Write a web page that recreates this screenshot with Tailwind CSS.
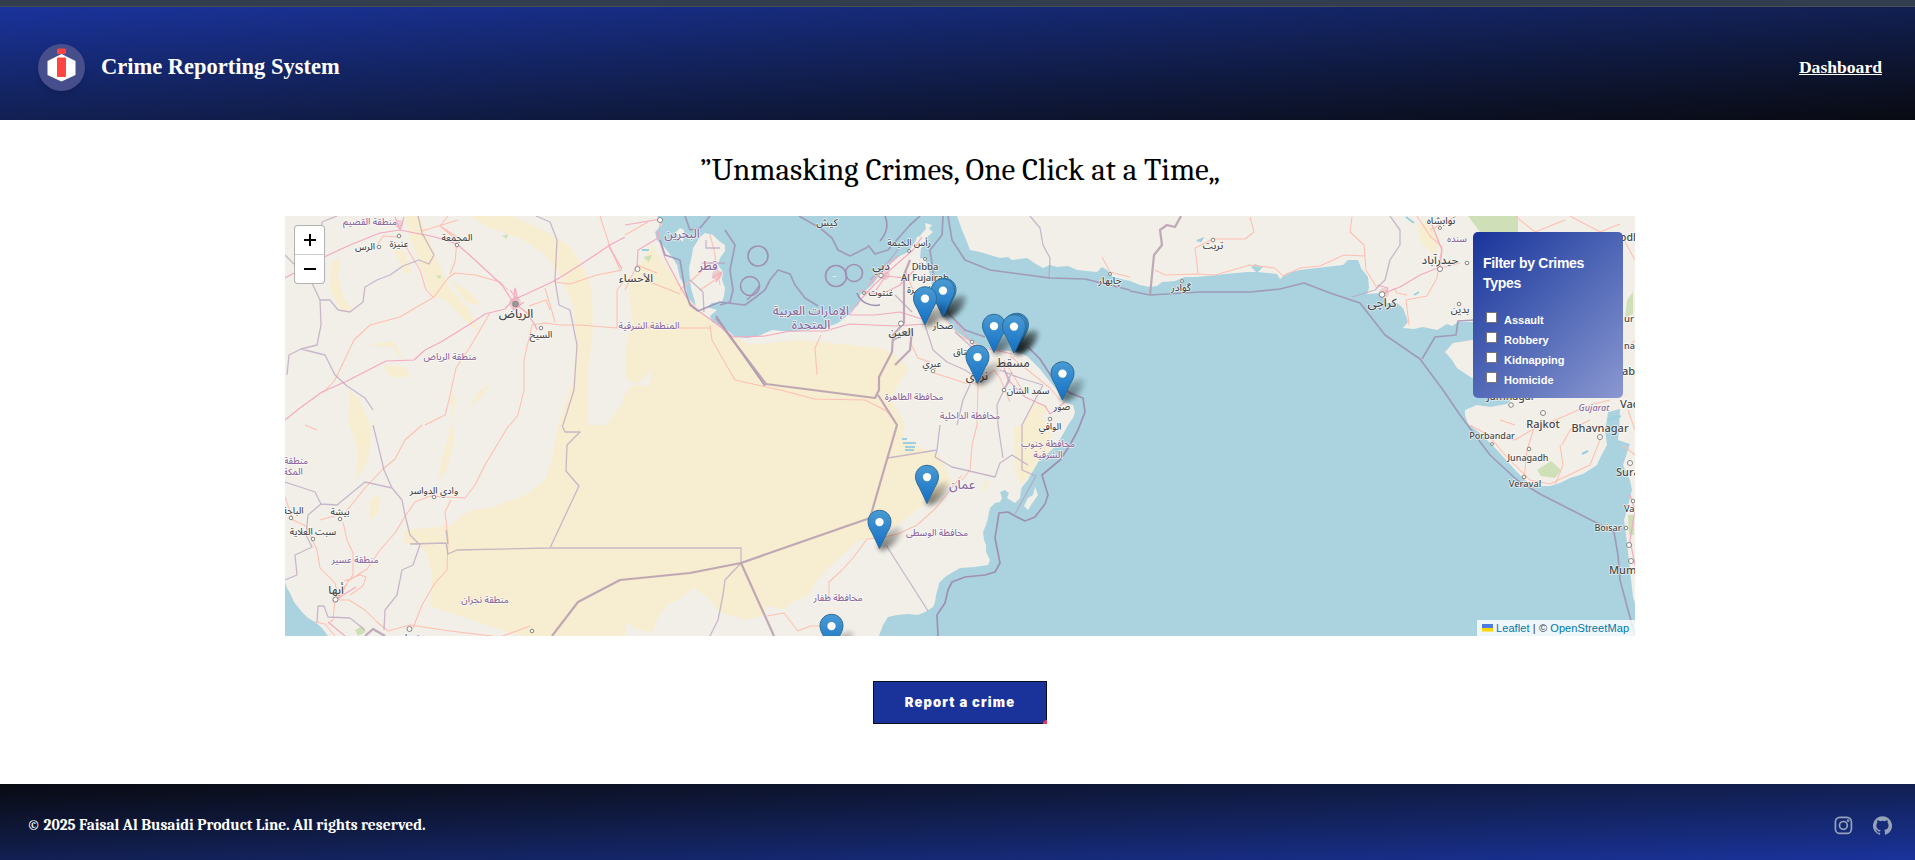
<!DOCTYPE html>
<html lang="en">
<head>
<meta charset="utf-8">
<title>Crime Reporting System</title>
<script src="https://cdn.jsdelivr.net/npm/@tailwindcss/browser@4"></script>
</head>
<body class="bg-white h-[860px] overflow-hidden flex flex-col font-['Liberation_Sans',sans-serif]">
<div class="h-[7px] shrink-0 bg-[#323d4d] border-b border-[#4a4d55]"></div>
<header class="h-[113px] shrink-0 flex items-center justify-between pl-[38px] pr-[33px] pb-px bg-linear-to-br from-[#1a339c] to-[#090a12] text-white font-['Liberation_Serif',serif] font-bold">
  <div class="flex items-center gap-[16px] pt-[9px]">
    <svg class="size-[47px] rounded-full bg-[#464f8c] shadow-md" viewBox="0 0 47 47"><path d="M23.500 10 37.500 17V31L23.500 37.500 9.500 31V17Z" fill="#fff"/><rect x="19" y="13.500" width="9" height="19.500" rx="1" fill="#ff4444"/><rect x="19" y="4.500" width="9" height="5.500" rx="1.500" fill="#ff4444"/></svg>
    <h1 class="text-[22.500px] leading-7 pb-[2px] whitespace-nowrap">Crime Reporting System</h1>
  </div>
  <a class="text-[17.600px] underline pt-[8px]">Dashboard</a>
</header>
<main class="flex-1 flex flex-col items-center">
  <h2 class="h-[96px] pt-[30px] text-[31px] leading-[40px] text-black font-['Cambria','Caladea','Liberation_Serif',serif] whitespace-nowrap mr-[-5px]">”Unmasking Crimes, One Click at a Time„</h2>
  <div class="relative w-[1350px] h-[420px] overflow-hidden mr-[-5px]">
  <svg class="block w-[1350px] h-[420px]" viewBox="285 216 1350 420">
    <defs>
      <linearGradient id="pin" x1="0" y1="0" x2="0" y2="1"><stop offset="0" stop-color="#4a9bd2"/><stop offset="1" stop-color="#126fc6"/></linearGradient>
      <linearGradient id="shade" x1="0" y1="0" x2="1" y2="0"><stop offset="0" stop-color="#000" stop-opacity=".75"/><stop offset="1" stop-color="#000" stop-opacity=".15"/></linearGradient>
      <filter id="soft" x="-50%" y="-80%" width="200%" height="260%"><feGaussianBlur stdDeviation="2.600"/></filter>
      <symbol id="marker" viewBox="0 0 50 45" width="50" height="45" overflow="visible">
        <ellipse cx="23" cy="29" rx="15" ry="6.500" transform="rotate(-45 23 29)" fill="url(#shade)" opacity=".75" filter="url(#soft)"/>
        <path d="M12.500 .8C6 .8 1 5.800 1 12.300c0 4.200 2 7.500 4 11L12.500 39 20 23.300c2-3.500 4-6.800 4-11C24 5.800 19 .8 12.500.8Z" fill="url(#pin)" stroke="#2e6c97" stroke-width="1"/>
        <circle cx="12.500" cy="12.600" r="4.200" fill="#fff"/>
      </symbol>
      <clipPath id="arabia"><path d="M285 216V582L290 593 302 612 315 622 328 636H879L883 625 888 617 908 614 927 611 935 602 938 588 945 577 960 568 988 565 990 560 986 545 983 532 988 518 990 508 995 503 1000 492 1005 490 1009 493 1007 498 1015 503 1020 498 1022 487 1028 480 1038 462 1055 447 1068 425 1075 412 1073 405 1060 397 1047 378 1033 362 1023 354 1010 351 997 350 972 343 957 332 943 315 937 295 932 287 925 259 921 248 850 290 825 328 735 337 712 322 690 300 657 240 657 216Z"/></clipPath>
    </defs>
    <rect x="285" y="216" width="1350" height="420" fill="#aad3df"/>
    <!-- land -->
    <g fill="#f2efe9">
      <path d="M285 216V582L287 588 290 593 294 602 302 612 308 618 315 622 322 628 328 636H879L883 625 888 617 897 615 908 614 918 615 927 611 933 607 935 602 936 595 938 588 939 583 945 577 953 572 960 568 975 567 988 565 990 560 986 552 986 545 984 540 983 532 986 525 988 518 989 512 990 508 995 503 1000 502 1002 498 1000 492 1005 490 1009 493 1007 498 1015 503 1020 498 1021 490 1022 487 1028 480 1032 472 1038 462 1046 452 1055 447 1062 436 1068 425 1073 418 1075 412 1073 405 1063 402 1060 397 1056 389 1047 378 1040 369 1033 362 1028 357 1023 354 1010 351 997 350 985 348 972 343 964 337 957 332 949 323 943 315 940 304 937 295 932 287 930 275 925 259 920 258 921 248 928 243 925 239 933 232 929 229 932 225 925 223 926 229 923 232 920 236 917 237 915 242 908 252 900 256 892 262 886 266 882 272 872 285 860 295 861 300 858 305 853 309 848 315 838 323 825 328 810 330 792 332 772 330 758 336 748 338 735 337 725 328 712 322 710 316 717 310 707 307 712 303 722 302 724 296 725 288 722 280 723 272 718 265 720 258 725 251 725 245 719 241 713 235 705 233 700 237 697 242 693 248 692 255 689 268 690 280 691 288 695 302 696 308 693 304 688 298 686 288 680 278 677 265 672 257 665 248 657 240 655 232 662 225 657 216Z"/>
      <path d="M957 216 962 230 967 242 970 250 980 252 990 255 1000 258 1008 257 1012 260 1027 258 1036 264 1043 268 1050 265 1057 267 1068 266 1077 270 1097 272 1102 267 1107 270 1113 277 1130 281 1140 285 1150 287 1157 286 1162 282 1175 281 1185 277 1197 277 1225 274 1247 272 1256 272 1251 267 1255 264 1263 267 1258 272 1277 274 1280 279 1287 273 1300 270 1317 268 1343 265 1348 260 1358 260 1361 268 1368 277 1369 288 1367 294 1383 293 1384 300 1387 303 1397 303 1403 308 1406 316 1408 322 1403 328 1414 329 1423 327 1437 330 1447 324 1452 326 1458 322 1472 322 1500 325 1500 338 1472 340 1453 343 1445 352 1452 360 1457 368 1472 378 1500 390 1540 385 1540 392 1513 398 1507 404 1490 407 1477 405 1465 410 1465 415 1468 424 1480 433 1497 450 1507 461 1517 472 1527 482 1538 486 1550 486 1560 483 1570 478 1583 474 1597 465 1601 456 1607 445 1605 430 1607 420 1608 412 1620 409 1619 428 1618 440 1630 444 1623 465 1630 480 1632 490 1627 510 1624 520 1627 543 1630 570 1633 597 1635 603V216Z"/>
      <path d="M676 232 680 228 684 230 683 242 679 238ZM1024 506 1028 498 1033 495 1035 487 1038 495 1033 502 1028 510Z"/>
      <path d="M833 276h3v1h-3Z"/>
    </g>
    <!-- sand -->
    <g fill="#f7edd1" clip-path="url(#arabia)">
      <path d="M470 216H512L545 231 570 246 584 268 592 290 593 330 588 370 588 425 606 425 623 403 624 395 633 385 650 386 652 370 636 384 625 378 626 345 632 320 628 285 640 265 652 245 690 300 722 330 750 345 800 340 880 348 895 355 909 368 897 386 892 400 905 425 902 441 940 455 948 475 952 482 935 500 918 508 905 520 895 526 877 537 858 541 841 556 827 569 815 583 808 596 795 600 784 610 768 606 762 616 745 620 720 612 708 598 694 588 682 598 668 605 657 619 653 632 640 630 626 623 625 636H520L430 606 432 575 427 555 420 545 405 544 404 530 450 526 470 510 490 508 525 495 545 480 552 460 558 425 563 410 573 380 577 340 573 305 560 275 545 255 520 238 490 228Z"/>
      <path d="M405 216h15l15 38 13 32 20 22 12 24-14-10-18-20-18-8-10-30-10-25ZM332 262l8-4-2 20 6 20 10 14-14-2-10-20ZM392 245l14 8 6 22-8-3ZM450 280l20 12 12 14-16-4ZM493 380l-16 14-8 14 12-10ZM350 390l10 10 12 30-4 30-12 20 2-30-10-30ZM450 390l6 10-6 30-8 30-4 20 8-8 8-30ZM366 345l28-4 10 20-12-14ZM383 365l22 2 6 10-20 0ZM370 500l10-6-2 20-8 6Z"/>
      <path d="M1014 427 1044 418 1055 447 1020 486 1015 470ZM1035 402l14 4-10 15-16 3ZM985 480l5 2-7 12Z"/>
    </g>
    <path d="M1417 226l12-5 10 17-3 18-14-12Z" fill="#f7edd1"/>
    <path d="M1468 216h50v20h-35ZM1627 300l6-8v22l-8 4ZM1537 470l14-9 10 9-6 8-14-2ZM1628 515h6v20h-5ZM643 257l9-2-3 7ZM355 630l7-4 4 6-8 4ZM502 236l6-2-1 5ZM436 275l6 1-3 3Z" fill="#cfe0b8"/>
    <path d="M902 439h5m-4 4h13m-11 4h10m-10 3h9M1197 241l5-2-2 3M1414 295l5-3M1607 420l14-4M1582 454l6-3M642 250h7M1406 217l8 6" stroke="#9ccfdf" stroke-width="2" fill="none"/>
    <!-- built-up areas -->
    <g fill="#e9b9c2" opacity=".6"><circle cx="515" cy="303" r="6"/><circle cx="399" cy="224" r="4"/><circle cx="717" cy="275" r="5"/><circle cx="885" cy="275" r="5"/><circle cx="1384" cy="293" r="5"/><circle cx="335" cy="600" r="3"/></g>
    <!-- roads -->
    <g fill="none" stroke="#ffbfb0" stroke-width="1.050" stroke-linejoin="round">
      <path d="M323 393 335 380 354 340 370 325 400 317 434 297 448 278 455 273 475 275 500 282 508 290M448 216 440 226 457 240 455 262 450 274M405 245 420 270 426 290 433 297M422 231 458 220M440 226 457 237M398 237 383 236 378 244M490 313 470 347 456 368 449 400 445 415 425 425M532 325 527 347 524 360 524 390 518 415 510 425M532 325 545 323 560 325 580 325 617 328 617 290 625 280M600 216 610 247 620 270M554 282 570 284 597 275 622 270M545 288 555 322M529 306 546 300 550 310M305 425 317 430"/>
      <path d="M422 425 405 440 395 459 383 469 365 488 345 513 320 520M509 425 500 440 486 463 475 485 465 498 430 496 415 502 404 518 395 533 380 550 367 569 348 581 339 600M451 500 445 512 448 538 447 570 435 583 422 605 413 628M285 497 293 520 306 526 317 550 320 568 335 583 339 600 349 600 365 610 377 622 388 631 410 625 450 631 500 637 530 626M343 522 347 540 353 553 353 575 335 600M344 581 360 575 366 577 363 586 350 595M335 600 333 620 330 622M315 622 325 624 335 636"/>
      <path d="M710 325 712 340 735 380 780 390 815 399 865 400 885 410 895 420M711 328H625M821 335 815 348 817 375M680 290 715 260M700 290 718 278M710 235 714 250 720 285M625 235 648 222M625 290 637 265 657 273M650 282 680 294M910 342 918 358 930 362M934 373 950 378 965 383 977 384 994 370 1000 378 1010 402M978 384 977 425 972 445 970 470 962 480M962 475 950 490 936 508 917 525 898 534 880 538 867 539 853 558 841 571 829 582 829 602M767 616 784 613 798 631 810 626 830 626"/>
      <path d="M1010 356 1030 372 1050 388 1060 400M925 320 917 300 905 270M943 317 960 336 985 348M1004 360 1010 370 1025 395M1102 257 1110 272 1130 277M1155 270 1165 275 1198 274 1215 275 1250 265 1275 268 1283 276 1300 268 1320 266 1344 255 1365 256M1250 217 1254 232 1245 239H1213L1195 248 1198 273M1352 217 1350 232 1364 245 1366 270 1377 288M1417 216 1430 236 1442 247 1437 278 1427 296 1406 300 1409 325M1440 268 1460 263M1430 230 1440 225 1456 216M1394 288 1397 293 1407 295"/>
      <path d="M1470 425 1490 436 1515 440 1535 428 1560 418 1590 405 1610 400M1534 428 1527 450 1524 480M1560 445 1563 465 1555 485M1490 437 1505 455 1530 480 1550 484 1590 465 1600 440M1590 420 1570 430 1562 445M1500 420 1515 425M1624 240 1635 260M1625 350 1635 340M1628 410 1635 430M1623 445 1635 455M1515 216 1535 232 1565 220M1570 216 1600 232 1620 224"/>
    </g>
    <g fill="none" stroke="#f4a9c0" stroke-width="1.200" stroke-linejoin="round">
      <path d="M285 420 300 408 322 392 347 381 386 361 414 360 425 350 441 342 470 324 485 314 505 309 513 300 535 290 556 280 580 265 610 245 625 237M513 302 502 285 475 260 457 244 435 237 400 230 380 233 350 245 324 257 285 278M395 217 400 230 404 217M608 245 622 269M513 302 527 313 535 325 537 330M510 290 518 300 515 288 513 310 524 302"/>
      <path d="M625 225 655 220 661 219 658 238 638 250 637 268M657 232 665 258 682 290 690 303 700 312 714 322 733 337 765 336 790 331 825 331 850 324 895 326 925 324M849 315 862 298 875 284 890 270 913 250 922 237M849 315H875L900 312 925 320M860 290 880 295 900 285 922 262M943 300 950 315 975 347 1000 351 1012 354M1002 362 1008 380 1025 397 1045 406 1050 414 1065 402M1382 294 1400 287 1420 275 1440 267 1442 250 1432 225M1377 285 1388 288 1385 294M868 285 898 256M712 278 722 272 716 282M876 290 886 276 905 278M335 600 348 592 356 587M328 622 345 636M1630 495 1635 510 1630 540 1635 565"/>
    </g>
    <!-- administrative limits -->
    <g fill="none" stroke="#b79fbd" stroke-linejoin="round">
      <g stroke-width="1.300" opacity=".7">
        <path d="M337 216 322 222 320 240M418 216 422 233 434 255 429 264 419 260 403 266 390 275 377 280 365 287 363 302 350 312 338 310 330 300 320 300 312 283 300 270 285 255M320 300 321 325 317 345 301 349 289 355 287 375M301 349 325 355 335 375 347 386 365 398 373 410M536 216 550 222 557 240 555 280 559 305 570 310 577 345 574 390 563 425M373 425 378 445 384 470 392 488 402 500 405 515 410 535 420 545 413 565 402 570 397 595 385 610 384 630M285 482 300 487 315 492 321 504 337 505 365 482 392 488M321 504 308 515 306 535 312 547 295 555 297 575 285 580M317 622 318 606 324 606 328 617 350 618 365 630M448 544 446 530M410 544 446 543 448 554 457 550 550 548 741 548 741 563M562 425 565 432 580 432 567 445 566 471 579 486 550 548M741 563 725 580 723 595 718 620 710 636M940 425 937 450 935 457 952 467 995 477 1000 463 1012 455 1028 465M888 458 937 450M886 545 928 611M925 325 933 350 947 362 965 370 974 376 963 400 957 425M955 332 975 350M1000 370 1020 378 1043 385M1012 372 997 405 998 425 1003 458M1004 370 1010 380 1003 392M1043 385 1035 400 1022 425 1022 470 1036 476 1015 514M1390 216 1400 230 1400 245 1390 260 1385 280 1375 290 1352 297"/>
        <path d="M1030 216 1040 228 1043 245 1050 258 1049 278M706 240V248H720M702 263H725M690 280 703 292 704 312M870 280 890 260 905 240M895 295 912 312"/>
      </g>
      <path d="M685 216 690 230 700 228 710 216M725 230 735 245 730 270 733 290 730 302 720 305M660 240 665 255 680 260 685 290 690 305 698 311 720 302 745 305 756 297M799 216 820 228 832 238 838 250 850 256 868 247M868 245 875 254 888 250 910 225 920 216M943 216 942 235 930 250 935 285 950 315 965 330 985 337M948 216 952 240 965 260 990 270 1020 274 1050 278 1085 279 1130 290M716 316 765 386M756 297 765 290 770 280 778 270 790 274 795 285 805 298 818 306M760 285 752 295 747 300M1130 291 1150 295 1200 292 1250 292 1280 289 1304 283 1330 293 1360 303 1385 335 1420 359 1443 390 1460 415 1490 455 1517 480 1540 494 1595 522 1614 532 1618 555 1620 580 1628 610 1635 635M1422 359 1435 337 1456 335 1458 321 1475 320" stroke-width="1.700" opacity=".85" stroke="#9f90b3"/>
      <path d="M1028 347 1040 359 1055 382 1070 393 1083 398 1085 412 1078 430 1070 445 1060 460 1042 475 1048 495 1045 504 1035 517 1025 521 1015 516 1008 512 999 513 995 538 1000 563 995 572 985 575 965 577 952 582 948 590 945 603 937 615 938 636" stroke-width="1.700" stroke="#9f90b3"/>
      <path d="M716 318 766 384 875 398 879 390 879 377 892 352 893 335 904 323 904 275 910 260M878 395 897 425 870 518 741 563 690 573 620 580 578 602 552 636M741 563 774 636M1150 295 1154 255 1162 245 1160 230 1167 225 1175 227 1181 216M365 636 373 629 385 636M893 340 912 330 910 350 895 365" stroke-width="2.200" opacity=".85" stroke="#b69bae"/>
      <g stroke-width="1.600" stroke="#9f90b3"><circle cx="758" cy="256" r="10"/><circle cx="750" cy="286" r="9.500"/><circle cx="836" cy="276" r="10.500"/><circle cx="854" cy="273" r="8.500"/><path d="M885 216C889 225 886 234 880 241M880 305c-10 2-20-3-23-12"/></g>
    </g>
    <!-- towns -->
    <g fill="#fff" stroke="#858580" stroke-width="1">
      <circle cx="379" cy="247" r="1.800"/><circle cx="399" cy="236" r="1.800"/><circle cx="457" cy="245" r="1.800"/><circle cx="541" cy="328" r="1.800"/><circle cx="515.500" cy="304" r="2.800" fill="#999"/><circle cx="660" cy="220" r="2.500"/><circle cx="637.500" cy="269" r="2.500"/><circle cx="434" cy="497" r="1.800"/><circle cx="340" cy="519" r="1.800"/><circle cx="291" cy="518" r="1.800"/><circle cx="313" cy="539" r="1.800"/><circle cx="335.500" cy="599.500" r="2.500"/><circle cx="409.500" cy="629" r="2.500"/><circle cx="532" cy="631" r="1.800"/><circle cx="881" cy="275.500" r="2.300"/><circle cx="864" cy="293" r="1.500"/><circle cx="925" cy="259" r="1.500"/><circle cx="909" cy="251" r="1.500"/><circle cx="901" cy="323.500" r="2.500"/><circle cx="933" cy="371" r="1.800"/><circle cx="972" cy="342" r="1.800"/><circle cx="1004" cy="390" r="1.800"/><circle cx="1050" cy="419" r="1.800"/><circle cx="1110" cy="274" r="1.500"/><circle cx="1182" cy="281" r="1.500"/><circle cx="1213" cy="240" r="1.800"/><circle cx="1382" cy="294.500" r="2.800"/><circle cx="1440" cy="269" r="2.500"/><circle cx="1467" cy="263" r="1.800"/><circle cx="1459" cy="304" r="1.800"/><circle cx="1440" cy="228" r="1.500"/><circle cx="1511" cy="405" r="2.300"/><circle cx="1543" cy="413" r="2.500"/><circle cx="1600" cy="437" r="2.500"/><circle cx="1492" cy="444" r="1.500"/><circle cx="1529" cy="449" r="1.800"/><circle cx="1524" cy="477" r="1.800"/><circle cx="1630" cy="463" r="2.500"/><circle cx="1633" cy="501" r="1.800"/><circle cx="1626" cy="528" r="1.800"/><circle cx="1629" cy="545" r="2.500"/><circle cx="1631" cy="561" r="2.500"/>
    </g>
    <!-- labels -->
    <g class="font-['Noto_Sans','Noto_Sans_Arabic','DejaVu_Sans',sans-serif] font-medium" text-anchor="middle" stroke="#fff" stroke-opacity=".7" stroke-width="1.600" stroke-linejoin="round" paint-order="stroke" fill="#484848" font-size="9.200">
      <text x="365" y="250">الرس</text><text x="399" y="247">عنيزة</text><text x="457" y="241">المجمعة</text><text x="516" y="318" font-size="12">الرياض</text><text x="541" y="338">السيح</text><text x="636" y="282" font-size="11">الأحساء</text>
      <text x="434" y="494">وادي الدواسر</text><text x="340" y="515">بيشة</text><text x="293" y="514">الباحة</text><text x="313" y="535">سبت العلاية</text><text x="336" y="594" font-size="11.500">أبها</text><text x="409" y="641">نجران</text>
      <text x="827" y="226" font-size="10">كيش</text><text x="909" y="246">رأس الخيمة</text><text x="881" y="270" font-size="11.500">دبي</text><text x="881" y="296">غنتوت</text><text x="925" y="270" font-size="9.500">Dibba</text><text x="925" y="281" font-size="9.500">Al Fujairah</text><text x="920" y="293">الفجيرة</text><text x="901" y="336" font-size="11.500">العين</text><text x="943" y="329">صحار</text><text x="932" y="367">عبري</text><text x="968" y="355">الرستاق</text><text x="977" y="380" font-size="11.500">نزوى</text><text x="1013" y="367" font-size="12">مسقط</text><text x="1028" y="394">سمد الشأن</text><text x="1062" y="410">صور</text><text x="1050" y="430">الوافي</text>
      <text x="1110" y="284" font-size="9.800">چابهار</text><text x="1181" y="291" font-size="9.800">گوادر</text><text x="1213" y="249" font-size="9.800">تربت</text><text x="1441" y="224" font-size="9.800">نوابشاه</text><text x="1440" y="264" font-size="11.500">حيدرآباد</text><text x="1382" y="307" font-size="12">کراچی</text><text x="1460" y="313" font-size="9.800">بدين</text>
      <text x="1511" y="400" font-size="10.500">Jamnagar</text><text x="1543" y="428" font-size="11">Rajkot</text><text x="1600" y="432" font-size="11">Bhavnagar</text><text x="1492" y="439" font-size="9">Porbandar</text><text x="1528" y="461" font-size="9">Junagadh</text><text x="1525" y="487" font-size="9.200">Veraval</text><text x="1608" y="531" font-size="9">Boisar</text>
      <g text-anchor="start"><text x="1616" y="476" font-size="11">Surat</text><text x="1624" y="512" font-size="9">Vapi</text><text x="1609" y="574" font-size="11">Mumbai</text><text x="1620" y="408" font-size="11">Vadodara</text><text x="1624" y="322" font-size="9.500">ur</text><text x="1624" y="349" font-size="9">na</text><text x="1622" y="375" font-size="11">ab</text><text x="1620" y="241" font-size="10.500">odhpur</text></g>
      <g fill="#8d6a9c" font-size="9.200">
        <text x="370" y="225">منطقة القصيم</text><text x="450" y="360">منطقة الرياض</text><text x="649" y="329">المنطقة الشرقية</text><text x="682" y="238" font-size="12">البحرين</text><text x="708" y="270" font-size="12">قطر</text><text x="811" y="315" font-size="12.400">الإمارات العربية</text><text x="811" y="329" font-size="12.400">المتحدة</text><text x="914" y="400">محافظة الظاهرة</text><text x="970" y="419">محافظة الداخلية</text><text x="962" y="489" font-size="12.400">عمان</text><text x="937" y="536">محافظة الوسطى</text><text x="838" y="601">محافظة ظفار</text><text x="1048" y="447">محافظة جنوب</text><text x="1048" y="458">الشرقية</text><text x="296" y="464">منطقة</text><text x="293" y="475">المكة</text><text x="355" y="563">منطقة عسير</text><text x="485" y="603">منطقة نجران</text><text x="1457" y="242">سنده</text><text x="1594" y="411" font-size="9" font-style="italic">Gujarat</text>
      </g>
    </g>
    <use href="#marker" x="932" y="277.500"/><use href="#marker" x="930.500" y="278"/><use href="#marker" x="912.500" y="286"/>
    <use href="#marker" x="1004.500" y="312.500"/><use href="#marker" x="1003" y="313"/><use href="#marker" x="981.500" y="313.500"/><use href="#marker" x="1001.500" y="314"/><use href="#marker" x="965" y="344.500"/><use href="#marker" x="1050" y="361"/>
    <use href="#marker" x="914.500" y="464.500"/><use href="#marker" x="867" y="509.500"/><use href="#marker" x="819" y="613.500"/>
  </svg>
  <div class="absolute left-[9px] top-[9px] w-[31px] rounded-[4px] border border-black/30 bg-white text-black overflow-hidden">
    <div class="h-[29px] flex items-center justify-center border-b border-[#ccc]"><svg width="14" height="14" viewBox="0 0 14 14"><path d="M1 7H13M7 1V13" stroke="#000" stroke-width="2"/></svg></div>
    <div class="h-[28px] flex items-center justify-center"><svg width="14" height="14" viewBox="0 0 14 14"><path d="M1 7H13" stroke="#000" stroke-width="2"/></svg></div>
  </div>
  <div class="absolute left-[1188px] top-4 w-[150px] h-[166px] rounded-[5px] bg-linear-135 from-[#1a339a] to-[#8b97d0] text-white font-bold px-[10px] pt-[21px]">
    <h3 class="text-[14px] leading-5 w-[120px] -tracking-[0.3px]">Filter by Crimes Types</h3>
    <div class="mt-[17px] pl-[3px] text-[11px] leading-5">
      <label class="flex h-5"><span class="size-[11px] mt-[2px] mr-[7px] bg-white border border-[#767676] rounded-[1px]"></span><span>Assault</span></label>
      <label class="flex h-5"><span class="size-[11px] mt-[2px] mr-[7px] bg-white border border-[#767676] rounded-[1px]"></span><span>Robbery</span></label>
      <label class="flex h-5"><span class="size-[11px] mt-[2px] mr-[7px] bg-white border border-[#767676] rounded-[1px]"></span><span>Kidnapping</span></label>
      <label class="flex h-5"><span class="size-[11px] mt-[2px] mr-[7px] bg-white border border-[#767676] rounded-[1px]"></span><span>Homicide</span></label>
    </div>
  </div>
  <div class="absolute right-0 bottom-0 h-4 w-[158px] pl-[5px] bg-white/80 flex items-center text-[11px] tracking-[0.09px] text-[#0078a8] whitespace-nowrap"><svg class="mr-[3px] shrink-0" width="11" height="8" viewBox="0 0 11 8"><path fill="#4c7be1" d="M0 0H11V4H0Z"/><path fill="#ffd500" d="M0 4H11V7.500H0Z"/></svg><span>Leaflet</span><span class="text-[#444] whitespace-pre"> | © </span><span>OpenStreetMap</span></div>
  </div>
  <button class="relative mt-[45px] w-[174px] h-[43px] bg-[#1a339a] border border-[#0a0f20] text-white font-['Inter','Liberation_Sans',sans-serif] font-black text-[13px] tracking-[1.150px] whitespace-nowrap mr-[-5px]">Report a crime<span class="absolute right-[-1px] bottom-[-1px] size-[4px] rounded-tl-sm bg-[#e6395a]"></span></button>
</main>
<footer class="h-[76px] shrink-0 flex items-center justify-between pl-[27px] pr-[23px] pt-[7px] bg-linear-to-br from-[#090a12] to-[#1a339c] text-white">
  <p class="text-[15.500px] font-bold font-['Cambria','Caladea','Liberation_Serif',serif] whitespace-nowrap">© 2025 Faisal Al Busaidi Product Line. All rights reserved.</p>
  <div class="flex gap-[20px] text-[#94a3b8]">
    <svg width="19" height="19" viewBox="0 0 19 19" fill="none" stroke="currentColor" stroke-width="1.700"><rect x="1.400" y="1.400" width="16" height="16" rx="4.500"/><circle cx="9.400" cy="9.400" r="3.900"/><circle cx="14.100" cy="4.700" r=".5"/></svg>
    <svg width="19" height="19" viewBox="0 0 24 24" fill="currentColor"><path d="M12 .3a12 12 0 0 0-3.800 23.400c.6.100.8-.3.800-.6v-2c-3.300.7-4-1.600-4-1.600-.6-1.400-1.400-1.800-1.400-1.800-1-.7.1-.7.1-.7 1.200 0 1.900 1.200 1.900 1.200 1 1.800 2.800 1.300 3.500 1 0-.8.400-1.300.7-1.600-2.700-.3-5.500-1.300-5.500-6 0-1.200.5-2.300 1.300-3.100-.2-.4-.6-1.600 0-3.200 0 0 1-.3 3.400 1.200a11.500 11.500 0 0 1 6 0c2.300-1.500 3.300-1.200 3.300-1.200.6 1.600.2 2.800 0 3.200.9.800 1.300 1.900 1.300 3.200 0 4.600-2.800 5.600-5.500 5.900.5.400.9 1 .9 2.200v3.300c0 .3.100.7.800.6A12 12 0 0 0 12 .3"/></svg>
  </div>
</footer>
</body>
</html>
